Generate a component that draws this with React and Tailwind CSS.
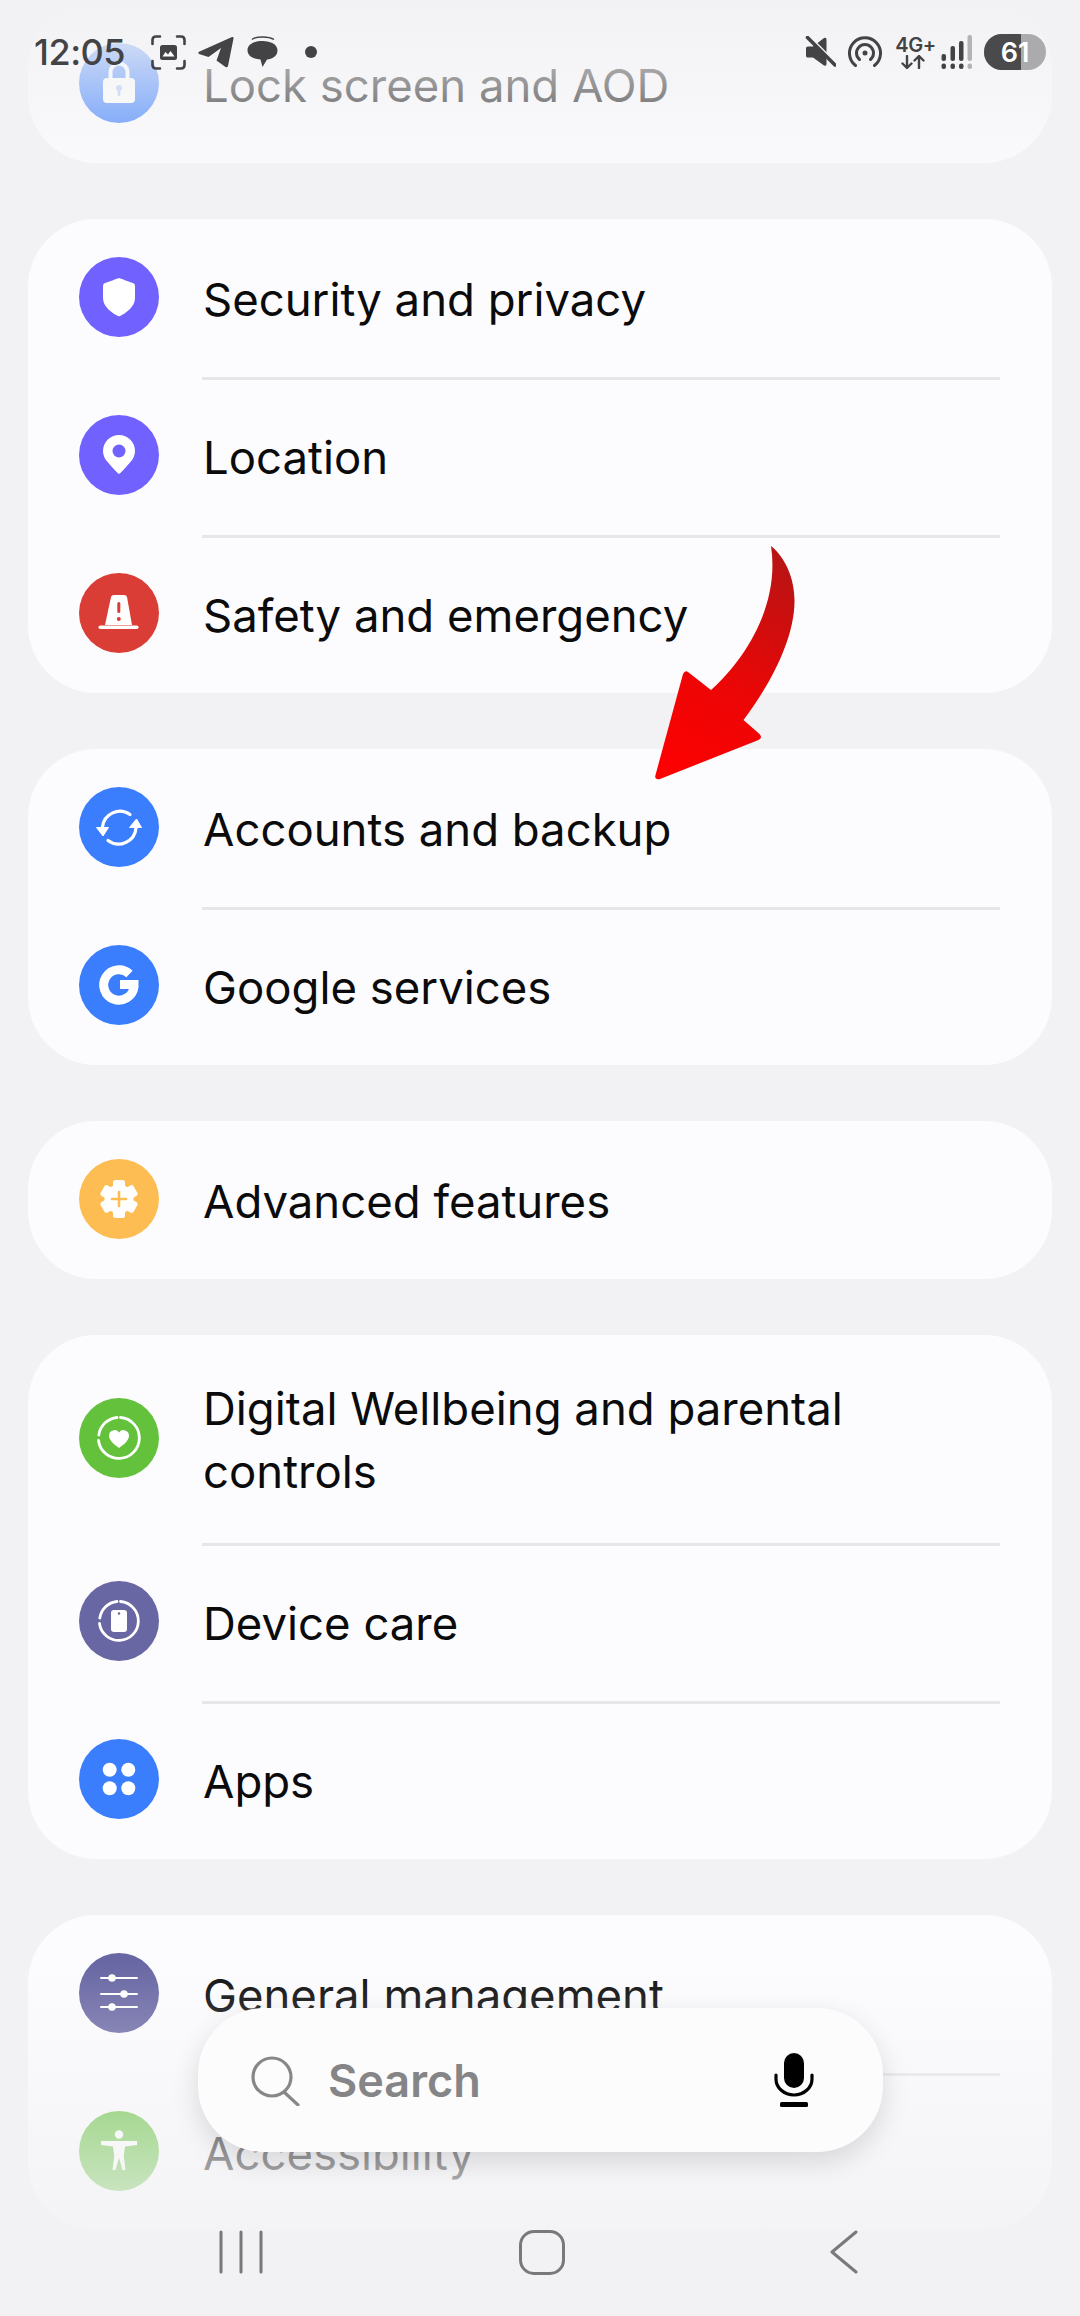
import React from "react";

const Circle = ({ color, children }) => (
  <div className={`w-[80px] h-[80px] rounded-full shrink-0 -mt-[2px] ${color}`}>
    <svg viewBox="0 0 80 80" className="w-[80px] h-[80px]">{children}</svg>
  </div>
);

const Ring = ({ r }) => (
  <g fill="none" stroke="#fff" strokeWidth="2.8" strokeLinecap="round">
    <path d={`M${40 + 1.5} ${40 - r} A${r} ${r} 0 1 1 ${40 - r} ${40 + 2.5}`} />
    <path d={`M${40 - r + 0.3} ${40 - 3} A${r} ${r} 0 0 1 ${40 - 2} ${40 - r}`} />
  </g>
);

const Lock = (
  <g fill="#fff">
    <path d="M31.500 37v-8a8.500 8.500 0 0 1 17 0v8" fill="none" stroke="#fff" strokeWidth="4" />
    <rect x="24" y="35" width="32" height="25" rx="4" />
    <circle cx="40" cy="45" r="3" fill="#a9c5fb" />
    <rect x="38.700" y="45" width="2.600" height="8" rx="1.300" fill="#a9c5fb" />
  </g>
);
const Shield = <path d="M40 21 C41 21 50 25 54 26 Q56 26.500 56 29 V41 C56 50 47 56 41 59 Q40 59.500 39 59 C33 56 24 50 24 41 V29 Q24 26.500 26 26 C30 25 39 21 40 21Z" fill="#fff" />;
const Pin = (
  <g>
    <path d="M40 59 Q38.500 58.500 29 47.500 A16 16 0 1 1 51 47.500 Q41.500 58.500 40 59Z" fill="#fff" />
    <circle cx="40" cy="36" r="6.500" fill="#7161fe" />
  </g>
);
const Cone = (
  <g>
    <path d="M32 24 Q32.500 22 35 22 H45 Q47.500 22 48 24 L53 52 H26Z" fill="#fff" />
    <rect x="19.500" y="52.500" width="40" height="3.500" rx="1.700" fill="#fff" />
    <rect x="38.300" y="29" width="3" height="11" rx="1.500" fill="#d93d35" />
    <circle cx="39.800" cy="46" r="2" fill="#d93d35" />
  </g>
);
const Sync = (
  <g>
    <g fill="none" stroke="#fff" strokeWidth="3.200" strokeLinecap="round">
      <path d="M51 27.500 A17.500 17.500 0 0 0 23.500 40" />
      <path d="M29 53.500 A17.500 17.500 0 0 0 57 41" />
    </g>
    <path d="M17.500 40.500 H29.500 L24 49Z" fill="#fff" stroke="#fff" strokeWidth="1" strokeLinejoin="round" />
    <path d="M50.500 40.500 H62.500 L57.500 32Z" fill="#fff" stroke="#fff" strokeWidth="1" strokeLinejoin="round" />
  </g>
);
const GIcon = <path d="M50.500 29 A15.200 15.200 0 1 0 55 42 V39.500 H41" fill="none" stroke="#fff" strokeWidth="9" />;
const Gear = (
  <g>
    <circle cx="40" cy="40" r="14.500" fill="#fff" />
    <g fill="#fff">
      {[0, 60, 120, 180, 240, 300].map((a) => (
        <rect key={a} x="34" y="21" width="12" height="10" rx="2.500" transform={`rotate(${a} 40 40)`} />
      ))}
    </g>
    <path d="M40 33 V47 M33 40 H47" stroke="#fdbd52" strokeWidth="2.600" strokeLinecap="round" />
  </g>
);
const Well = (
  <g>
    <Ring r={20.500} />
    <path d="M40 50 C36 47 30 43 30 37.500 A5.500 5.500 0 0 1 40 34.500 A5.500 5.500 0 0 1 50 37.500 C50 43 44 47 40 50Z" fill="#fff" />
  </g>
);
const Care = (
  <g>
    <Ring r={19.500} />
    <rect x="32" y="29" width="16" height="22" rx="3" fill="#fff" />
    <circle cx="40" cy="32.500" r="1.200" fill="#6866a3" />
  </g>
);
const Apps = (
  <g fill="#fff">
    <circle cx="30.700" cy="30.700" r="7" />
    <circle cx="49.300" cy="30.700" r="7" />
    <circle cx="30.700" cy="49.300" r="7" />
    <circle cx="49.300" cy="49.300" r="7" />
  </g>
);
const Sliders = (
  <g>
    <g stroke="#fff" strokeWidth="2" strokeLinecap="round">
      <path d="M22 25 H58 M22 41 H58 M22 54 H58" />
    </g>
    <g fill="#fff">
      <circle cx="33" cy="25" r="3.800" />
      <circle cx="45" cy="41" r="3.800" />
      <circle cx="33" cy="54" r="3.800" />
    </g>
  </g>
);
const Person = (
  <g fill="#fff">
    <circle cx="40" cy="23.500" r="4.200" />
    <path d="M22 30 H58 V34 L46 35.500 L44.800 45 L46.500 59 H43.500 L40 47 L36.500 59 H33.500 L35.200 45 L34 35.500 L22 34Z" />
  </g>
);

const Row = ({ icon, color, children }) => (
  <div className="flex items-center h-[158px] pl-[51px] pr-[50px] gap-[44px]">
    <Circle color={color}>{icon}</Circle>
    <div className="text-[#0b0b0c] text-[45.5px] leading-[63px] pt-[2px]">{children}</div>
  </div>
);

const Rule = () => <div className="h-[3px] -mb-[3px] ml-[174px] mr-[52px] bg-[#e6e6e8]" />;

const Card = ({ className = "", children }) => (
  <div className={`bg-[#fcfcfe] rounded-[68px] overflow-hidden ${className}`}>{children}</div>
);

const Arrow = () => (
  <svg viewBox="0 0 1080 2316" className="absolute left-0 top-0 w-[1080px] h-[2316px] pointer-events-none">
    <defs>
      <linearGradient id="arrowFill" x1="790" y1="560" x2="660" y2="780" gradientUnits="userSpaceOnUse">
        <stop offset="0" stopColor="#b81414" />
        <stop offset="0.55" stopColor="#ec0606" />
        <stop offset="1" stopColor="#ff0000" />
      </linearGradient>
    </defs>
    <path
      d="M771 546 C786 558 795 580 794.500 602 C794 640 770 685 743.500 720 L759.500 734 Q763 738 758.500 740 L660 779 Q654 780 655.500 775 L683 674 Q685 670 688 672 L711 690 C745 660 780 605 771 546Z"
      fill="url(#arrowFill)"
    />
  </svg>
);

const StatusBar = () => (
  <div className="absolute left-0 top-0 w-full h-[104px] pl-[34px] pr-[34px] flex items-center text-[#434345]">
    <span className="text-[36px] font-medium leading-none w-[97px] tracking-[-0.5px]">12:05</span>
    <svg viewBox="0 0 35 35" className="w-[35px] h-[35px] ml-[20px]" fill="none" stroke="#434345" strokeWidth="2.600" strokeLinecap="round">
      <path d="M1.500 9 V5 Q1.500 1.500 5 1.500 H9 M26 1.500 H30 Q33.500 1.500 33.500 5 V9 M33.500 26 V30 Q33.500 33.500 30 33.500 H26 M9 33.500 H5 Q1.500 33.500 1.500 30 V26" />
      <rect x="9" y="10" width="17" height="15" rx="2.500" fill="#434345" stroke="none" />
      <path d="M11.500 21.500 L14.500 17 L17 19.500 L19.500 16 L23.500 21.500Z" fill="#fff" stroke="none" />
    </svg>
    <svg viewBox="0 0 36 32" className="w-[36px] h-[32px] ml-[12px]" fill="#434345">
      <path d="M0.500 16 L34 1 Q36 0.500 35.500 2.500 L30 30 Q29.500 32 27.500 31 L18.500 24.500 L23 12 L10.500 21 L1 18 Q0 17 0.500 16Z" />
    </svg>
    <svg viewBox="0 0 31 32" className="w-[31px] h-[32px] ml-[13px]" fill="#434345">
      <path d="M5 3.500 C9 0 22 0 27 3.500" fill="none" stroke="#434345" strokeWidth="1.500" />
      <path d="M15.500 5 C24 5 30.500 8.500 30.500 14.500 C30.500 20 25 23.500 20 23.500 L15.500 31 L13.500 23.500 C6 23 0.500 20 0.500 14 C0.500 8.500 7 5 15.500 5Z" />
    </svg>
    <span className="w-[12px] h-[12px] rounded-full bg-[#434345] ml-[27px]" />
    <div className="flex-1" />
    <svg viewBox="0 0 32 32" className="w-[32px] h-[32px]">
      <path d="M2 12 Q2 10.500 4 10.500 H9 L20 2 Q22.500 1 22.500 3.500 V28 Q22.500 30.500 20 29.500 L9 21.500 H4 Q2 21.500 2 20Z" fill="#434345" />
      <path d="M5 0 L32 27" stroke="#f4f4f6" strokeWidth="2" />
      <path d="M3.500 1.500 L31 29" stroke="#434345" strokeWidth="3.600" strokeLinecap="round" />
    </svg>
    <svg viewBox="0 0 34 32" className="w-[34px] h-[32px] ml-[12px]" fill="none" stroke="#434345" strokeWidth="3" strokeLinecap="round">
      <path d="M7.500 29.500 A15.500 15.500 0 1 1 26.500 29.500" />
      <path d="M11.500 23.500 A8.500 8.500 0 1 1 22.500 23.500" />
      <circle cx="17" cy="17" r="2.500" fill="#434345" stroke="none" />
    </svg>
    <div className="w-[41px] ml-[13px] flex flex-col items-center">
      <span className="text-[20px] leading-[19px] font-semibold tracking-[-0.5px] whitespace-nowrap">4G+</span>
      <svg viewBox="0 0 24 14" className="w-[24px] h-[14px] -ml-[6px]" fill="none" stroke="#434345" strokeWidth="2.400" strokeLinecap="round" strokeLinejoin="round">
        <path d="M6 1 V13 M1.500 8.500 L6 13 L10.500 8.500" />
        <path d="M18 13 V1 M13.500 5.500 L18 1 L22.500 5.500" />
      </svg>
    </div>
    <svg viewBox="0 0 31 34" className="w-[31px] h-[34px] ml-[5px]">
      <g fill="#434345">
        <rect x="0.500" y="19" width="4.500" height="7" rx="2" />
        <rect x="0.500" y="28.500" width="4.500" height="5.500" rx="2" />
        <rect x="9.500" y="11" width="4.500" height="15" rx="2" />
        <rect x="9.500" y="28.500" width="4.500" height="5.500" rx="2" />
        <rect x="18" y="6" width="4.500" height="20" rx="2" />
        <rect x="18" y="28.500" width="4.500" height="5.500" rx="2" />
      </g>
      <g fill="#b3b3b5">
        <rect x="26.500" y="0" width="4.500" height="26" rx="2" />
        <rect x="26.500" y="28.500" width="4.500" height="5.500" rx="2" />
      </g>
    </svg>
    <div className="relative w-[62px] h-[36px] ml-[12px] rounded-full overflow-hidden bg-[#ababad] flex items-center justify-center">
      <div className="absolute left-0 top-0 h-full w-[37px] bg-[#4a4a4c]" />
      <span className="relative text-white text-[27px] font-semibold leading-none">61</span>
    </div>
  </div>
);

const SearchPill = () => (
  <div className="absolute left-[198px] top-[2008px] w-[685px] h-[144px] rounded-[66px] bg-[#fcfcfc] shadow-[0_10px_28px_rgba(0,0,0,0.13)] flex items-center pl-[52px] pr-[69px]">
    <svg viewBox="0 0 50 50" className="w-[50px] h-[50px] mt-[1px]" fill="none" stroke="#878789" strokeWidth="3.200" strokeLinecap="round">
      <circle cx="22" cy="21" r="19" />
      <path d="M34 36 L48 49" />
    </svg>
    <span className="ml-[28px] text-[#858587] text-[45px] font-semibold leading-none">Search</span>
    <div className="flex-1" />
    <svg viewBox="0 0 40 54" className="w-[40px] h-[54px]" fill="none" stroke="#000" strokeWidth="3.200" strokeLinecap="round">
      <rect x="10" y="0" width="20" height="35" rx="10" fill="#000" stroke="none" />
      <path d="M2 22 V26 A18 16 0 0 0 38 26 V22" />
      <rect x="6" y="49" width="28" height="5" rx="1.500" fill="#000" stroke="none" />
    </svg>
  </div>
);

const NavBar = () => (
  <div className="absolute left-0 top-[2230px] w-full h-[44px] flex items-center pl-[219px]">
    <svg viewBox="0 0 44 44" className="w-[44px] h-[44px]" stroke="#79797b" strokeWidth="3" strokeLinecap="round">
      <path d="M2 2 V42 M22 2 V42 M42 2 V42" />
    </svg>
    <div className="w-[46px] h-[45px] ml-[256px] rounded-[15px] border-[3px] border-[#79797b]" />
    <svg viewBox="0 0 28 44" className="w-[28px] h-[44px] ml-[265px]" fill="none" stroke="#79797b" strokeWidth="3" strokeLinecap="round" strokeLinejoin="round">
      <path d="M26 2 L2 22 L26 42" />
    </svg>
  </div>
);

export default function App() {
  return (
    <div className="relative w-[1080px] h-[2316px] overflow-hidden bg-[#f2f2f4] font-['Inter',sans-serif]">
      <div className="flex flex-col gap-[56px] px-[28px]">
        <Card className="h-[163px] flex flex-col justify-end">
          <Row icon={Lock} color="bg-[#3a7dfd]">Lock screen and AOD</Row>
        </Card>
        <Card>
          <Row icon={Shield} color="bg-[#7161fe]">Security and privacy</Row>
          <Rule />
          <Row icon={Pin} color="bg-[#7161fe]">Location</Row>
          <Rule />
          <Row icon={Cone} color="bg-[#d93d35]">Safety and emergency</Row>
        </Card>
        <Card>
          <Row icon={Sync} color="bg-[#3a7dfd]">Accounts and backup</Row>
          <Rule />
          <Row icon={GIcon} color="bg-[#3a7dfd]">Google services</Row>
        </Card>
        <Card>
          <Row icon={Gear} color="bg-[#fdbd52]">Advanced features</Row>
        </Card>
        <Card>
          <div className="flex items-center h-[208px] pl-[51px] pr-[50px] gap-[44px]">
            <Circle color="bg-[#63c13c]">{Well}</Circle>
            <div className="text-[#0b0b0c] text-[45.5px] leading-[63px] pt-[2px]">
              Digital Wellbeing and parental
              <br />
              controls
            </div>
          </div>
          <Rule />
          <Row icon={Care} color="bg-[#6866a3]">Device care</Row>
          <Rule />
          <Row icon={Apps} color="bg-[#3a7dfd]">Apps</Row>
        </Card>
        <Card>
          <Row icon={Sliders} color="bg-[#6866a3]">General management</Row>
          <Rule />
          <Row icon={Person} color="bg-[#63c13c]">Accessibility</Row>
        </Card>
        <Card className="h-[100px]" />
      </div>

      <div className="absolute left-0 top-0 w-full h-[210px] bg-linear-to-b from-[#f2f2f4] to-transparent" />
      <div className="absolute left-0 top-[1960px] w-full h-[356px] bg-linear-to-b from-transparent via-[#f2f2f4ee] via-85% to-[#f2f2f4]" />

      <Arrow />
      <StatusBar />
      <SearchPill />
      <NavBar />
    </div>
  );
}
